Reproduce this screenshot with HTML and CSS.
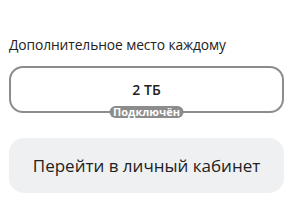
FILE: index.html
```html
<!DOCTYPE html>
<html lang="ru">
<head>
    <meta charset="UTF-8">
    <meta name="viewport" content="width=device-width, initial-scale=1.0">
    <title>Место</title>
    <link rel="stylesheet" href="styles.css">
</head>
<body>
    <div class="panel">
        <div class="label">Дополнительное место каждому</div>
        <div class="option">
            <span class="size">2 ТБ</span>
            <span class="badge">Подключён</span>
        </div>
        <div class="cabinet-btn">Перейти в личный кабинет</div>
    </div>
</body>
</html>
```

FILE: styles.css
```css
body {
    margin: 0;
    background: #fff;
    font-family: "Open Sans", "Noto Sans", sans-serif;
    color: #222;
}
.panel {
    display: flex;
    flex-direction: column;
    padding: 36px 18px 0 9px;
}
.label {
    font-size: 13.8px;
    line-height: 18px;
    letter-spacing: -0.1px;
}
.option {
    position: relative;
    margin-top: 12px;
    height: 43px;
    border: 2px solid #8c8c8c;
    border-radius: 14px;
    display: flex;
    align-items: center;
    justify-content: center;
}
.size {
    font-size: 14px;
    font-weight: 600;
}
.badge {
    position: absolute;
    left: 50%;
    bottom: -7px;
    transform: translateX(-50%);
    background: #8c8c8c;
    color: #fff;
    font-size: 11px;
    font-weight: 700;
    line-height: 12px;
    padding: 0 4px;
    border-radius: 6px;
    white-space: nowrap;
}
.cabinet-btn {
    margin-top: 25px;
    height: 55px;
    border-radius: 15px;
    background: #eff0f2;
    display: flex;
    align-items: center;
    justify-content: center;
    font-size: 17px;
    cursor: pointer;
}
```
